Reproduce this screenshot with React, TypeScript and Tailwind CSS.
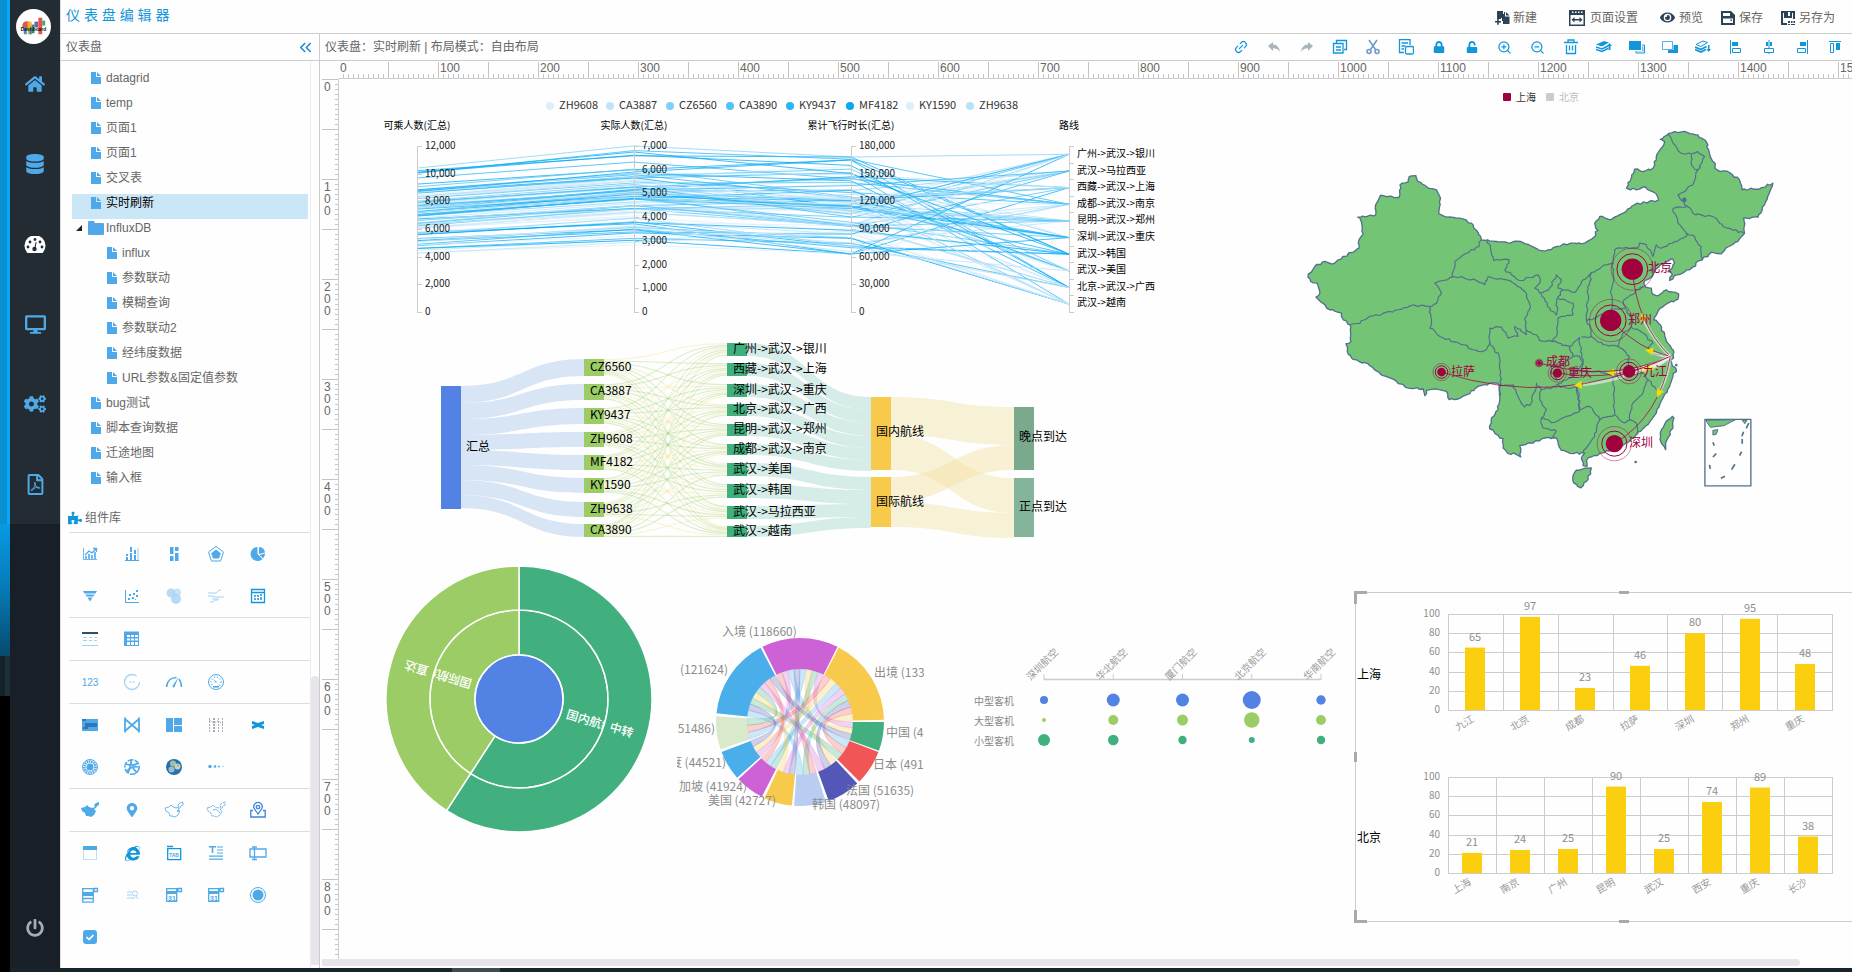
import type { ReactNode } from "react";
import {
  FaCogs,
  FaDatabase,
  FaDesktop,
  FaEye,
  FaHome,
  FaInternetExplorer,
  FaLock,
  FaMapMarkerAlt,
  FaPowerOff,
  FaPuzzlePiece,
  FaRegFilePdf,
  FaUnlock,
} from "react-icons/fa";
import { FiChevronsLeft, FiLink2, FiZoomIn, FiZoomOut } from "react-icons/fi";

// Widgets keep editor coordinates, the board itself starts right after the rulers.
const ORIGIN = { x: 339, y: 79 };

const BLUE = "#5282e4";
const LIME = "#9bcc66";
const GREEN = "#41b07e";
const YELLOW = "#f7ca4c";

type Pt = [number, number];

function createRandom(seed: number) {
  let s = seed;
  return () => {
    s = (s * 16807) % 2147483647;
    return s / 2147483647;
  };
}

/* ---------------------------------------------------------------- sidebar */

function GaugeIcon() {
  return (
    <svg viewBox="0 0 22 17" className="h-[17px] w-[22px]" aria-hidden="true">
      <path d="M3 16.500A10.500 10.500 0 1119 16.500q-.5.5-1.200.5H4.200q-.7 0-1.200-.5z" fill="currentColor" />
      <g fill="#242c33">
        <circle cx="4" cy="11" r="1.400" />
        <circle cx="6" cy="6" r="1.400" />
        <circle cx="11" cy="3.500" r="1.400" />
        <circle cx="16" cy="6" r="1.400" />
        <circle cx="18" cy="11" r="1.400" />
        <circle cx="10.500" cy="13" r="2.200" />
        <path d="M11.600 6l1 .3-1.200 6h-1z" />
      </g>
    </svg>
  );
}

const NAV = [
  { label: "首页", icon: <FaHome size={20} /> },
  { label: "数据源", icon: <FaDatabase size={20} /> },
  { label: "仪表盘", icon: <GaugeIcon />, active: true },
  { label: "大屏", icon: <FaDesktop size={21} /> },
  { label: "设置", icon: <FaCogs size={22} /> },
  { label: "报表", icon: <FaRegFilePdf size={21} /> },
];

function Logo() {
  return (
    <svg viewBox="0 0 36 36" className="h-[35px] w-[35px]" aria-hidden="true">
      <circle cx="18" cy="18" r="18" fill="#fff" />
      <circle cx="11" cy="17" r="4.500" fill="#e2574c" />
      <path d="M8 18h3v8H8z" fill="#3b8fd0" />
      <path d="M12 13h4v13h-4z" fill="#f0b429" />
      <path d="M16 16h3v9h-3z" fill="#2f8f6b" />
      <path d="M19 13h4v6h-4z" fill="#7b5ea7" />
      <path d="M23 9h4v17h-4z" fill="#e2574c" />
      <path d="M27 12h3v5h-3z" fill="#3fa66b" />
      <path d="M14 20h2v6h-2z" fill="#2d7fc4" />
      <text x="18" y="23" fontSize="5" fontWeight="700" textAnchor="middle" fill="#111">
        Dashboard
      </text>
    </svg>
  );
}

function Sidebar() {
  return (
    <nav className="flex w-[50px] shrink-0 flex-col items-stretch bg-[#181f26]">
      <div className="bg-[#242c33] pt-[9px]">
        <div className="flex justify-center pr-[3px]">
          <Logo />
        </div>
        {NAV.map((item) => (
          <button
            key={item.label}
            type="button"
            aria-label={item.label}
            className={
              item.active
                ? "flex h-20 w-full items-center justify-center text-white"
                : "flex h-20 w-full items-center justify-center text-[#4fa9e8]"
            }
          >
            {item.icon}
          </button>
        ))}
      </div>
      <button
        type="button"
        aria-label="退出"
        className="mt-auto flex h-20 items-center justify-center text-[#a3adb3]"
      >
        <FaPowerOff size={18} />
      </button>
    </nav>
  );
}

/* ----------------------------------------------------------------- header */

function Glyph({ d, children }: { d?: string; children?: ReactNode }) {
  return (
    <svg
      viewBox="0 0 16 16"
      className="h-4 w-4 shrink-0"
      fill="currentColor"
      fillRule="evenodd"
      aria-hidden="true"
    >
      {d && <path d={d} />}
      {children}
    </svg>
  );
}

function Header() {
  return (
    <header className="flex h-[34px] shrink-0 items-center justify-between border-b border-[#ccc] pl-[5px] pr-[17px]">
      <h1 className="pb-1 text-sm text-[#1296db]">仪 表 盘 编 辑 器</h1>
      <div className="flex items-center pt-[2px] text-xs text-[#666]">
        <button type="button" className="mr-8 flex items-center gap-[2px]">
          <span className="text-[#2c4356]">
            <Glyph d="M2 1h6v3h-1v4H6v1H2zM9 2l1 0 0 4.500 4.500 0V14H8v-3H7V4h2zM11 2l3.500 3.500H11zM0 11h2.200V9h1.600v2H6v1.600H3.800v2.200H2.200v-2.200H0z" />
          </span>
          新建
        </button>
        <button type="button" className="mr-[22px] flex items-center gap-[5px]">
          <span className="text-[#2c4356]">
            <Glyph d="M0 0h16v16H0zM1.500 5v9.500h13V5zM3 1.500v1.500h1.500V1.500zM6 1.500v1.500h1.500V1.500zM9 1.500v1.500h1.500V1.500zM12 1.500v1.500h1.500V1.500zM2.500 9.700l3-2.700v2h5V7l3 2.700-3 2.700v-2h-5v2z" />
          </span>
          页面设置
        </button>
        <button type="button" className="mr-[17px] flex items-center gap-1">
          <FaEye size={15} className="text-[#2c4356]" />
          预览
        </button>
        <button type="button" className="mr-[17px] flex items-center gap-[3px]">
          <span className="text-[#2c4356]">
            <Glyph d="M1 1h10l4 4v10H1zM3 3v3h7V3zM3 8.500V13h10V8.500zM10.500 9.500h1.500v1.500h-1.500z" />
          </span>
          保存
        </button>
        <button type="button" className="flex items-center gap-[3px]">
          <span className="text-[#2c4356]">
            <Glyph d="M1 1h14v8h-2V3h-1v5H4V3H3v10h4v2H1zM8 2v4h2V2zM8 11h2v2H8zM11 11h1.500v2H11zM13.500 11H15v2h-1.500zM8 14h2v1H8zM11 14h4v1h-4z" />
          </span>
          另存为
        </button>
      </div>
    </header>
  );
}

const line = { fill: "none", stroke: "currentColor", strokeWidth: 1.3 };

const TOOLS: { label: string; icon: ReactNode; muted?: boolean }[] = [
  {
    label: "链接",
    icon: <FiLink2 size={14} className="-rotate-45" />,
  },
  {
    label: "撤销",
    muted: true,
    icon: <Glyph d="M2 7l5-4v2.500c4 .2 6.500 3 7 7.500-1.500-2.500-3.500-3.700-7-3.700V12z" />,
  },
  {
    label: "重做",
    muted: true,
    icon: <Glyph d="M14 7L9 3v2.500c-4 .2-6.500 3-7 7.500 1.500-2.500 3.500-3.700 7-3.700V12z" />,
  },
  {
    label: "复制",
    icon: (
      <Glyph>
        <path {...line} d="M4.500 4V1.500h10v9H12M1.500 4.500H11V14H1.500zM4 8h5M4 11h5" />
      </Glyph>
    ),
  },
  {
    label: "剪切",
    icon: (
      <Glyph>
        <g {...line} stroke="#6f9cc4" strokeWidth={1.6}>
          <path d="M4 1l6.500 9.500M12 1L5.500 10.500" />
          <circle cx="4" cy="12.500" r="2" />
          <circle cx="12" cy="12.500" r="2" />
        </g>
      </Glyph>
    ),
  },
  {
    label: "多选",
    icon: (
      <Glyph>
        <path {...line} d="M6 13.500H1.500v-13H12V6M3.500 4h6.500M3.500 7h4M3.500 10H6" />
        <rect {...line} x="7.500" y="7.500" width="8" height="7.500" rx="1.500" />
      </Glyph>
    ),
  },
  { label: "锁定", icon: <FaLock size={12} /> },
  { label: "解锁", icon: <FaUnlock size={12} /> },
  { label: "放大", icon: <FiZoomIn size={15} /> },
  { label: "缩小", icon: <FiZoomOut size={15} /> },
  {
    label: "删除",
    icon: (
      <Glyph>
        <path {...line} d="M1 3.500h14M5 3V1h6v2M3.500 6v8.500h9V6M6.500 6.500v5M9.500 6.500v5" />
      </Glyph>
    ),
  },
  {
    label: "置顶",
    icon: (
      <Glyph d="M0 5.500L8 2l5 1.500-7 4zM12.500 11V7H11l2.500-3L16 7h-1.500v4z">
        <path {...line} strokeWidth={1.6} d="M0 8l6 2 6-3M0 10.500l6 2 6-3" />
      </Glyph>
    ),
  },
  {
    label: "上移一层",
    icon: (
      <Glyph d="M0 2h12v9H0z">
        <path {...line} strokeWidth={1} d="M13 6h2.500v8H7v-2" />
        <path d="M13 7.500h1.500v5H8V12h5z" opacity=".6" />
      </Glyph>
    ),
  },
  {
    label: "下移一层",
    icon: (
      <Glyph d="M11.500 6H16v8H6v-3h5.500z">
        <path {...line} strokeWidth={1} d="M.5 2.500h10v8H.5z" opacity=".7" />
      </Glyph>
    ),
  },
  {
    label: "置底",
    icon: (
      <Glyph d="M13 6h1.500v4H16l-2.300 3L11.500 10H13z">
        <path {...line} strokeWidth={1} d="M1 5.500L8 2l4.500 1.500L6 7.500z" />
        <path {...line} strokeWidth={1.8} d="M0 8l6 2.500 5.500-3M0 10.500l6 2.500 5-2.500" />
      </Glyph>
    ),
  },
  {
    label: "左对齐",
    icon: (
      <Glyph d="M2 1h1v14H2zM4 3h6v4H4z">
        <path {...line} strokeWidth={1} d="M4.500 9.500h8v4h-8z" />
      </Glyph>
    ),
  },
  {
    label: "水平居中",
    icon: (
      <Glyph d="M7.500 1h1v14h-1zM5 3h6v4H5z">
        <path {...line} strokeWidth={1} fill="#fff" d="M3.500 9.500h9v4h-9z" />
      </Glyph>
    ),
  },
  {
    label: "右对齐",
    icon: (
      <Glyph d="M13 1h1v14h-1zM6 3h6v4H6z">
        <path {...line} strokeWidth={1} d="M3.500 9.500h8v4h-8z" />
      </Glyph>
    ),
  },
  {
    label: "顶对齐",
    icon: (
      <Glyph d="M2 2h12v1H2zM9 4h4v7H9z">
        <path {...line} strokeWidth={1} d="M3.500 4.500h3v9h-3z" />
      </Glyph>
    ),
  },
];

/* ------------------------------------------------------------- left panel */

const TREE: { name: string; depth: number; kind?: "folder"; active?: boolean }[] = [
  { name: "datagrid", depth: 0 },
  { name: "temp", depth: 0 },
  { name: "页面1", depth: 0 },
  { name: "页面1", depth: 0 },
  { name: "交叉表", depth: 0 },
  { name: "实时刷新", depth: 0, active: true },
  { name: "InfluxDB", depth: 0, kind: "folder" },
  { name: "influx", depth: 1 },
  { name: "参数联动", depth: 1 },
  { name: "模糊查询", depth: 1 },
  { name: "参数联动2", depth: 1 },
  { name: "经纬度数据", depth: 1 },
  { name: "URL参数&固定值参数", depth: 1 },
  { name: "bug测试", depth: 0 },
  { name: "脚本查询数据", depth: 0 },
  { name: "迁途地图", depth: 0 },
  { name: "输入框", depth: 0 },
];

function Tree() {
  return (
    <ul className="ml-[11px] mr-[2px] pt-2 text-xs text-[#666]">
      {TREE.map((node, i) => (
        <li key={i} className={node.active ? "h-[25px] bg-[#cbe6f6] text-black" : "h-[25px]"}>
          <button
            type="button"
            className={
              node.kind
                ? "flex h-[18px] items-center gap-[2px] pl-1"
                : node.depth
                  ? "flex h-[18px] items-center gap-[5px] pl-[35px]"
                  : "flex h-[18px] items-center gap-[5px] pl-[19px]"
            }
          >
            {node.kind ? (
              <>
                <svg viewBox="0 0 6 6" className="mr-1 h-[6px] w-[6px]" aria-hidden="true">
                  <path d="M6 0v6H0z" fill="#222" />
                </svg>
                <svg viewBox="0 0 16 14" className="h-[14px] w-4" fill="#4fa9e8" aria-hidden="true">
                  <path d="M1 0h5l1 2h8a1 1 0 011 1v10a1 1 0 01-1 1H1a1 1 0 01-1-1V1a1 1 0 011-1z" />
                </svg>
              </>
            ) : (
              <svg viewBox="0 0 10 12" className="h-3 w-[10px]" fill="#4fa9e8" aria-hidden="true">
                <path d="M0 0h5v5h5v7H0zM6 0l4 4H6z" />
              </svg>
            )}
            {node.name}
          </button>
        </li>
      ))}
    </ul>
  );
}

const CHINA_MINI =
  "M-1 6l4-1 2-2 2 2 3 1 3-1-1-2 2-2 3-1 0 3-2 1-1 2-2 1 2 2-2 4-3 2-3-1-2 0-1-3-3-2z";

function Ico({ children, light }: { children: ReactNode; light?: boolean }) {
  return (
    <svg
      viewBox="0 0 16 16"
      className={light ? "h-4 w-4 overflow-visible text-[#a5d2f2]" : "h-4 w-4 overflow-visible text-[#4fa9e8]"}
      fill="currentColor"
      fillRule="evenodd"
      aria-hidden="true"
    >
      {children}
    </svg>
  );
}

const cal31 = (
  <Ico>
    <path {...line} d="M.700 1.700h10v12.600h-10zM12 1.500h3.500v3H12z" />
    <path d="M1 4h10v3H1z" />
    <text x="2" y="13.500" fontSize="7" fontWeight="700">
      31
    </text>
  </Ico>
);

const WIDGET_GROUPS: { label: string; icon: ReactNode }[][] = [
  [
    {
      label: "折线图",
      icon: (
        <Ico>
          <path d="M1 2h1v11h13v1H1zM3 10h2v3H3zM6 8h2v5H6zM9 9h2v4H9zM12 6h2v7h-2z" opacity=".8" />
          <path {...line} d="M3 9l4-4 3 2 4-4M11 2.500h3.500V6" />
        </Ico>
      ),
    },
    {
      label: "柱状图",
      icon: (
        <Ico>
          <path d="M1 14h14v1H1zM2 8h2v2H2zM2 11h2v3H2zM6 1h2v5H6zM6 7h2v7H6zM10 4h2v4h-2zM10 9h2v5h-2z" />
          <path d="M13 2h2v12h-2z" opacity=".3" />
        </Ico>
      ),
    },
    {
      label: "瀑布图",
      icon: (
        <Ico>
          <path d="M4 1h3.500v7H4zM4 10h3.500v5H4zM9 1h3.500v4H9zM9 7h3.500v8H9z" />
        </Ico>
      ),
    },
    {
      label: "雷达图",
      icon: (
        <Ico>
          <path {...line} strokeWidth={1} d="M8 .5l7.500 5.500-3 9h-9l-3-9z" />
          <path d="M8 3.500l4.800 3.700-1.800 5.300H5L3.200 7.200z" />
        </Ico>
      ),
    },
    {
      label: "饼图",
      icon: (
        <Ico>
          <path d="M7.500 1v7l5 5A7 7 0 117.500 1zM9 1a6.500 6.500 0 016 5.500L9 8zM9.500 9l5.500-1.500c0 2-.7 3.500-2 4.700z" />
        </Ico>
      ),
    },
    {
      label: "漏斗图",
      icon: (
        <Ico>
          <path d="M1 3h14l-1.500 2.500h-11zM3.500 6.500h9l-1 2h-7zM5.500 9.500h5L8 13.500z" />
        </Ico>
      ),
    },
    {
      label: "散点图",
      icon: (
        <Ico>
          <path d="M1 2h1v12h13v1H1zM4 10h2v2H4zM5 6h2v2H5zM8 9h2v2H8zM9 5h2v2H9zM12 7h2v2h-2zM12 2h2v2h-2zM11 11h1v1h-1z" />
        </Ico>
      ),
    },
    {
      label: "气泡图",
      icon: (
        <Ico light>
          <circle cx="5" cy="5" r="4.500" opacity=".8" />
          <circle cx="11" cy="4.500" r="4" opacity=".6" />
          <circle cx="10" cy="11" r="5" opacity=".8" />
        </Ico>
      ),
    },
    {
      label: "主题河流",
      icon: (
        <Ico light>
          <path {...line} strokeWidth={1} d="M0 5h8l3-3h2M0 8h4l3 1h9M4 11h7M2 14h3l2-2h3" />
        </Ico>
      ),
    },
    {
      label: "日历图",
      icon: (
        <Ico>
          <path {...line} stroke="#1296db" d="M1.500 1.500h13v13h-13zM1.500 4.500h13" />
          <path d="M4 7h2v2H4zM7 7h2v2H7zM10 6h2v2h-2zM4 10h2v2H4zM7 10h2v2H7zM10 9h2v3h-2z" />
        </Ico>
      ),
    },
  ],
  [
    {
      label: "交叉表",
      icon: (
        <Ico light>
          <path d="M0 1h16v2H0z" fill="#2c4f6e" />
          <path d="M1 6h4v1H1zM7 6h3v1H7zM12 6h3v1h-3zM1 9h4v1H1zM7 9h3v1H7zM12 9h3v1h-3zM0 14h16v1H0z" />
        </Ico>
      ),
    },
    {
      label: "表格",
      icon: (
        <Ico>
          <path d="M0 .500h15V15H0zM3 4v2h3V4zM7 4v2h3V4zM11 4v2h3V4zM3 7.500v2h3v-2zM7 7.500v2h3v-2zM11 7.500v2h3v-2zM3 11v3h3v-3zM7 11v3h3v-3zM11 11v3h3v-3z" />
        </Ico>
      ),
    },
  ],
  [
    { label: "指标", icon: <span className="text-[10px] text-[#4fa9e8]">123</span> },
    {
      label: "进度",
      icon: (
        <Ico light>
          <circle {...line} cx="8" cy="8" r="7.500" strokeDasharray="40 7" />
          <path d="M5 7.500h2.500v1H5zM8.500 7.500H11v1H8.500z" />
        </Ico>
      ),
    },
    {
      label: "仪表",
      icon: (
        <Ico>
          <path {...line} strokeWidth={1.7} d="M.5 13C1 7 5 3.500 10.500 3.500M13 5c1.500 2 2.500 4 2.500 8" />
          <path d="M12.500 3L8.500 13c-1 1-2.500 0-2-1z" />
        </Ico>
      ),
    },
    {
      label: "刻度盘",
      icon: (
        <Ico>
          <circle {...line} strokeWidth={1} cx="8" cy="8" r="7.500" />
          <circle {...line} strokeWidth={1.2} cx="8" cy="8" r="5" strokeDasharray="1 2" />
          <path d="M5 5l4 3-1 1zM5 12h6v1.500H5z" />
        </Ico>
      ),
    },
  ],
  [
    {
      label: "热力图",
      icon: (
        <Ico>
          <path d="M0 2h16v12H0z" />
          <path d="M0 2h4v2H0zM3 6h12v4H3zM1 10h5v2H1z" fill="#2f78b5" />
        </Ico>
      ),
    },
    {
      label: "桑基图",
      icon: (
        <Ico>
          <path {...line} strokeWidth={1.8} d="M1 .5v15M15 .5v15M1 2l14 12M15 2L1 14" />
        </Ico>
      ),
    },
    {
      label: "矩形树图",
      icon: (
        <Ico>
          <path d="M0 1h7v14H0zM8 1h8v7H8zM8 9h8v6H8z" />
        </Ico>
      ),
    },
    {
      label: "平行坐标",
      icon: (
        <Ico light>
          <path {...line} stroke="#a9a9b8" strokeWidth={1} strokeDasharray="2 1" d="M1.500 1v14M5.500 1v14M6.500 1v14M10.500 1v14M14.500 1v14M1 3l5 3 4-2 5 3" />
        </Ico>
      ),
    },
    {
      label: "关系图",
      icon: (
        <Ico>
          <path d="M2 4l6 2 6-2v8l-6-2-6 2z" fill="#1296db" />
          <path d="M2 7l3 1-3 1zM14 7l-3 1 3 1z" fill="#fff" />
        </Ico>
      ),
    },
    {
      label: "旭日图",
      icon: (
        <Ico>
          <circle cx="8" cy="8" r="3.500" />
          <circle {...line} strokeWidth={2.5} cx="8" cy="8" r="5.500" strokeDasharray="1.500 .7" />
          <circle {...line} strokeWidth={1} cx="8" cy="8" r="7.500" />
        </Ico>
      ),
    },
    {
      label: "和弦图",
      icon: (
        <Ico>
          <circle {...line} strokeWidth={1.6} cx="8" cy="8" r="7.200" strokeDasharray="6 1.300" />
          <path {...line} strokeWidth={1.8} d="M2 5c5 2 8 2 12-1M3 12c4-4 7-5 11-4M7 1c1 5-2 9-3 13M9 9l4 5" />
        </Ico>
      ),
    },
    {
      label: "气泡树",
      icon: (
        <Ico>
          <circle cx="8" cy="8" r="8" fill="#2272b0" />
          <circle cx="7" cy="4.500" r="3" fill="#a9bf9c" />
          <circle cx="11.500" cy="7.500" r="3" fill="#c8d3c4" />
          <circle cx="5.500" cy="10.500" r="3" fill="#9cbccb" />
          <circle cx="12" cy="6.500" r="1" fill="#d98a5b" />
        </Ico>
      ),
    },
    {
      label: "单轴散点",
      icon: (
        <Ico>
          <circle cx="2" cy="7.500" r="1.700" />
          <circle cx="7" cy="7.500" r="1.300" />
          <circle cx="11" cy="7.500" r="1" />
          <circle cx="15" cy="7.500" r=".8" opacity=".5" />
        </Ico>
      ),
    },
  ],
  [
    {
      label: "地图",
      icon: (
        <Ico>
          <path d={CHINA_MINI} />
        </Ico>
      ),
    },
    { label: "标记", icon: <FaMapMarkerAlt size={14} className="text-[#4fa9e8]" /> },
    {
      label: "轮廓地图",
      icon: (
        <Ico>
          <path {...line} strokeWidth={0.8} d={CHINA_MINI} />
          <circle cx="12" cy="9" r="1" />
        </Ico>
      ),
    },
    {
      label: "迁徙地图",
      icon: (
        <Ico>
          <path {...line} strokeWidth={0.8} strokeDasharray="3 .7" d={CHINA_MINI} />
          <path {...line} strokeWidth={0.8} d="M5 8c3-1 5 0 7 3" />
        </Ico>
      ),
    },
    {
      label: "定位地图",
      icon: (
        <Ico>
          <g {...line} stroke="#3d86d8">
            <path d="M3 8.500H.800V15h14.400V8.500H13M8 12L4.500 7a4.200 4.200 0 117 0z" />
            <circle cx="8" cy="5" r="1.700" />
          </g>
        </Ico>
      ),
    },
  ],
  [
    {
      label: "面板",
      icon: (
        <Ico>
          <path {...line} strokeWidth={1} d="M1.500 1.500h13v13h-13z" opacity=".35" />
          <path d="M1 1h14v4H1z" />
        </Ico>
      ),
    },
    { label: "网页", icon: <FaInternetExplorer size={15} className="text-[#1296db]" /> },
    {
      label: "标签页",
      icon: (
        <Ico>
          <path {...line} stroke="#1296db" d="M1.700 3.700h13v11h-13zM1 1.500h6" />
          <text x="8" y="11.500" fontSize="5" fontWeight="700" textAnchor="middle">
            TAB
          </text>
        </Ico>
      ),
    },
    {
      label: "文本",
      icon: (
        <Ico>
          <path d="M1 1h7v1.500H5.300V8H3.700V2.500H1zM9 1.500h6v1H9zM9 4.500h6v1H9zM9 7.500h6v1H9zM1 10.500h14v1.300H1zM1 13.500h14v1.300H1z" />
        </Ico>
      ),
    },
    {
      label: "输入框",
      icon: (
        <Ico>
          <path {...line} d="M0 4h16v8H0zM4.500 2v12.500M2 2h5M2 14.500h5" />
        </Ico>
      ),
    },
    {
      label: "下拉框",
      icon: (
        <Ico>
          <path {...line} d="M.700 1.700h10.600v13.500H.700zM12 1.500h3.500v3H12zM1 11.500h10" />
          <path d="M1 5h10v4H1z" />
        </Ico>
      ),
    },
    {
      label: "查询",
      icon: (
        <Ico light>
          <path {...line} strokeWidth={1} d="M3 5h5M3 8h5M3 11h8M12 9l2 3" />
          <circle {...line} strokeWidth={1} cx="11" cy="6.500" r="2.500" />
        </Ico>
      ),
    },
    { label: "日期", icon: cal31 },
    { label: "日期范围", icon: cal31 },
    {
      label: "单选",
      icon: (
        <Ico>
          <circle {...line} strokeWidth={1} cx="8" cy="8" r="7.500" />
          <circle cx="8" cy="8" r="5.500" />
        </Ico>
      ),
    },
    {
      label: "复选",
      icon: (
        <Ico>
          <rect x="1" y="1" width="14" height="14" rx="3" />
          <path d="M4.500 8l2.500 2.500 4.500-4.500" fill="none" stroke="#fff" strokeWidth="1.700" />
        </Ico>
      ),
    },
  ],
];

function LeftPanel() {
  return (
    <aside className="flex w-[259px] shrink-0 flex-col border-r border-[#ccc]">
      <div className="flex h-[27px] shrink-0 items-center justify-between border-b border-[#ccc] pl-[5px] pr-1 text-xs text-[#666]">
        仪表盘
        <button type="button" aria-label="收起" className="text-[#1e88d2]">
          <FiChevronsLeft size={19} />
        </button>
      </div>
      <div className="flex min-h-0 flex-1">
        <div className="min-w-0 flex-1 overflow-hidden border-r border-[#f0e8f4]">
          <Tree />
          <h2 className="flex h-[38px] items-center gap-[3px] pl-[7px] pt-[10px] text-xs text-[#666]">
            <FaPuzzlePiece size={14} className="text-[#1296db]" />
            组件库
          </h2>
          {WIDGET_GROUPS.map((group, i) => (
            <div key={i} className="ml-2 grid grid-cols-[repeat(5,42px)] border-t border-[#ddd]">
              {group.map((item) => (
                <button
                  key={item.label}
                  type="button"
                  aria-label={item.label}
                  className="flex h-[42px] items-center justify-center"
                >
                  {item.icon}
                </button>
              ))}
            </div>
          ))}
        </div>
        <div className="flex w-2 shrink-0 flex-col pb-[3px]">
          <div className="flex-[615]" />
          <div className="flex-[289] rounded-t bg-[#e8e4ec]" />
        </div>
      </div>
    </aside>
  );
}

/* ----------------------------------------------------------------- rulers */

const TICKS_X = Array.from({ length: 304 }, (_, i) => i * 5);
const TICKS_Y = Array.from({ length: 176 }, (_, i) => i * 5);

function RulerX() {
  return (
    <svg className="col-start-2 h-[18px] w-full border-b border-[#ccc]" fill="#666" fontSize="12">
      <path
        d={TICKS_X.map((t) => `M${t - 0.5} ${t % 50 ? 13 : 1}V18`).join("")}
        stroke="#c4c4c4"
      />
      {TICKS_X.filter((t) => t % 100 === 0).map((t) => (
        <text key={t} x={t + 1} y="11">
          {t}
        </text>
      ))}
    </svg>
  );
}

function RulerY() {
  return (
    <svg className="h-full w-full border-r border-[#ccc]" fill="#666" fontSize="12">
      <path
        d={TICKS_Y.map((t) => `M${t % 50 ? 15 : 2} ${t + 0.5}H19`).join("")}
        stroke="#c4c4c4"
      />
      {TICKS_Y.filter((t) => t % 100 === 0).map((t) =>
        String(t)
          .split("")
          .map((digit, i) => (
            <text key={`${t}-${i}`} x="4" y={t + 12 + i * 12}>
              {digit}
            </text>
          ))
      )}
    </svg>
  );
}

/* ---------------------------------------------------------------- widgets */

function Widget({
  x,
  y,
  w,
  h,
  label,
  children,
}: {
  x: number;
  y: number;
  w: number;
  h: number;
  label: string;
  children: ReactNode;
}) {
  return (
    <svg
      role="img"
      aria-label={label}
      className="absolute"
      style={{ left: x - ORIGIN.x, top: y - ORIGIN.y }}
      width={w}
      height={h}
      viewBox={`${x} ${y} ${w} ${h}`}
    >
      {children}
    </svg>
  );
}

const LEGEND = [
  { name: "ZH9608", color: "#dceefa" },
  { name: "CA3887", color: "#bfe4fa" },
  { name: "CZ6560", color: "#81d0fa" },
  { name: "CA3890", color: "#4fc3f7" },
  { name: "KY9437", color: "#29b6f6" },
  { name: "MF4182", color: "#03a9f4" },
  { name: "KY1590", color: "#dceefa" },
  { name: "ZH9638", color: "#b8e2fa" },
];

const PARALLEL_AXES = [
  { x: 417, name: "可乘人数(汇总)", ticks: ["12,000", "10,000", "8,000", "6,000", "4,000", "2,000", "0"] },
  { x: 634, name: "实际人数(汇总)", ticks: ["7,000", "6,000", "5,000", "4,000", "3,000", "2,000", "1,000", "0"] },
  { x: 851, name: "累计飞行时长(汇总)", ticks: ["180,000", "150,000", "120,000", "90,000", "60,000", "30,000", "0"] },
];

const ROUTES = [
  "广州->武汉->银川",
  "武汉->马拉西亚",
  "西藏->武汉->上海",
  "成都->武汉->南京",
  "昆明->武汉->郑州",
  "深圳->武汉->重庆",
  "武汉->韩国",
  "武汉->美国",
  "北京->武汉->广西",
  "武汉->越南",
];

const PARALLEL_LINES = (() => {
  const rand = createRandom(77);
  return Array.from({ length: 100 }, (_, i) => {
    const y1 = 168 + (i % 3 ? (rand() + rand()) / 2 : rand()) * 86;
    const y2 = y1 * 1.1 - 36 + (rand() - 0.5) * 8;
    const y3 = Math.min(254, Math.max(157, y2 + 9 + (rand() - 0.5) * 44));
    const y4 = 154.3 + (i % 10) * 16.65;
    return {
      d: `M417 ${y1.toFixed(1)}L634 ${y2.toFixed(1)}L851 ${y3.toFixed(1)}L1069 ${y4.toFixed(1)}`,
      color: LEGEND[Math.floor(rand() * 8)].color,
    };
  });
})();

function ParallelChart() {
  return (
    <Widget x={370} y={90} w={830} h={240} label="平行坐标">
      {LEGEND.map((item, i) => (
        <g key={item.name} fontSize="11">
          <circle cx={550 + i * 60} cy="106" r="4" fill={item.color} />
          <text x={559 + i * 60} y="109" fill="#333">
            {item.name}
          </text>
        </g>
      ))}
      {PARALLEL_LINES.map((l, i) => (
        <path key={i} d={l.d} fill="none" stroke={l.color} opacity=".75" />
      ))}
      {PARALLEL_AXES.map((axis) => (
        <g key={axis.x}>
          <text x={axis.x} y="129" fontSize="10" textAnchor="middle" fill="#000">
            {axis.name}
          </text>
          <path d={`M${axis.x + 0.5} 146V313`} stroke="#ccc" />
          {axis.ticks.map((tick, i) => {
            const y = Math.round(146 + (i * 166) / (axis.ticks.length - 1));
            return (
              <g key={tick}>
                <path d={`M${axis.x} ${y + 0.5}h5`} stroke="#ccc" />
                <text x={axis.x + 8} y={y + 3} fontSize="10" fill="#222">
                  {tick}
                </text>
              </g>
            );
          })}
        </g>
      ))}
      <text x="1069" y="129" fontSize="10" textAnchor="middle">
        路线
      </text>
      <path d="M1069.500 146V313" stroke="#ccc" />
      <path
        d={ROUTES.concat("").map((_, i) => `M1069 ${Math.round(146 + i * 16.6) + 0.5}h5`).join("")}
        stroke="#ccc"
      />
      {ROUTES.map((name, i) => (
        <text key={name} x="1077" y={157 + i * 16.6} fontSize="10">
          {name}
        </text>
      ))}
    </Widget>
  );
}

const FLIGHTS: [string, number, number][] = [
  ["CZ6560", 359, 17],
  ["CA3887", 384, 16],
  ["KY9437", 408, 16],
  ["ZH9608", 432, 15],
  ["MF4182", 455, 15],
  ["KY1590", 478, 15],
  ["ZH9638", 502, 15],
  ["CA3890", 524, 13],
];

const ROUTE_NODES: [string, number, number][] = [
  ["广州->武汉->银川", 343, 13],
  ["西藏->武汉->上海", 363, 13],
  ["深圳->武汉->重庆", 384, 13],
  ["北京->武汉->广西", 404, 12],
  ["昆明->武汉->郑州", 424, 12],
  ["成都->武汉->南京", 444, 11],
  ["武汉->美国", 463, 13],
  ["武汉->韩国", 484, 14],
  ["武汉->马拉西亚", 506, 13],
  ["武汉->越南", 526, 11],
];

function ribbon(x0: number, y0: number, x1: number, y1: number, h: number) {
  const mx = (x0 + x1) / 2;
  return `M${x0} ${y0}C${mx} ${y0} ${mx} ${y1} ${x1} ${y1}v${h}C${mx} ${y1 + h} ${mx} ${y0 + h} ${x0} ${y0 + h}z`;
}

function SankeyChart() {
  let rootY = 386;
  let domesticY = 397;
  let foreignY = 477;
  return (
    <Widget x={430} y={330} w={660} h={220} label="桑基图">
      {FLIGHTS.map(([name, y, h]) => {
        const d = ribbon(461, rootY, 584, y, h);
        rootY += h;
        return <path key={name} d={d} fill="#d7e5f5" />;
      })}
      {FLIGHTS.map(([name, y, h], i) =>
        ROUTE_NODES.map(([route, ry, rh], j) => (
          <path
            key={name + route}
            d={ribbon(604, y + (j * h) / 10, 727, ry + (i * rh) / 8, 1.3)}
            fill={(i + j) % 3 ? LIME : "#efe08a"}
            opacity=".32"
          />
        ))
      )}
      {ROUTE_NODES.map(([name, y, h], i) => {
        const d = ribbon(747, y, 871, i < 6 ? domesticY : foreignY, h);
        if (i < 6) domesticY += h;
        else foreignY += h;
        return <path key={name} d={d} fill="#d5ece8" />;
      })}
      <path d={ribbon(891, 397, 1014, 407, 38)} fill="#f7f2d6" />
      <path d={ribbon(891, 502, 1014, 513, 25)} fill="#f7f2d6" />
      <path d={ribbon(891, 435, 1014, 478, 35)} fill="#f7f2d6" />
      <path d={ribbon(891, 477, 1014, 445, 25)} fill="#f5dda0" opacity=".45" />

      <rect x="441" y="386" width="20" height="123" fill={BLUE} />
      {FLIGHTS.map(([name, y, h]) => (
        <rect key={name} x="584" y={y} width="20" height={h} fill={LIME} />
      ))}
      {ROUTE_NODES.map(([name, y, h]) => (
        <rect key={name} x="727" y={y} width="20" height={h} fill={GREEN} />
      ))}
      <rect x="871" y="397" width="20" height="73" fill={YELLOW} />
      <rect x="871" y="477" width="20" height="50" fill={YELLOW} />
      <rect x="1014" y="407" width="20" height="63" fill="#7aa98d" />
      <rect x="1014" y="478" width="20" height="59" fill="#84b59b" />

      <g fontSize="12" fill="#000">
        <text x="466" y="451">汇总</text>
        {FLIGHTS.map(([name, y, h]) => (
          <text key={name} x="590" y={y + h / 2 + 3}>
            {name}
          </text>
        ))}
        {ROUTE_NODES.map(([name, y, h]) => (
          <text key={name} x="733" y={y + h / 2 + 3}>
            {name}
          </text>
        ))}
        <text x="876" y="436">国内航线</text>
        <text x="876" y="506">国际航线</text>
        <text x="1019" y="441">晚点到达</text>
        <text x="1019" y="511">正点到达</text>
      </g>
    </Widget>
  );
}

function polar(cx: number, cy: number, r: number, deg: number): Pt {
  const a = ((deg - 90) * Math.PI) / 180;
  return [cx + r * Math.cos(a), cy + r * Math.sin(a)];
}

function sector(cx: number, cy: number, r0: number, r1: number, from: number, to: number) {
  const large = to - from > 180 ? 1 : 0;
  const a = polar(cx, cy, r1, from);
  const b = polar(cx, cy, r1, to);
  const c = polar(cx, cy, r0, to);
  const d = polar(cx, cy, r0, from);
  return `M${a}A${r1} ${r1} 0 ${large} 1 ${b}L${c}A${r0} ${r0} 0 ${large} 0 ${d}z`;
}

function SunburstChart() {
  return (
    <Widget x={380} y={560} w={280} h={280} label="旭日图">
      <g stroke="#fff" strokeWidth="1.500">
        <path d={sector(519, 699, 44, 89, 0, 213)} fill={GREEN} />
        <path d={sector(519, 699, 44, 89, 213, 360)} fill={LIME} />
      </g>
      <g fill="#fff" fontSize="12" fontWeight="500">
        <text transform="translate(519 699) rotate(16.500)" x="50" y="5">
          国内航线
        </text>
        <text transform="translate(519 699) rotate(196.500)" x="50" y="5">
          国际航线
        </text>
      </g>
      <g stroke="#fff" strokeWidth="1.500">
        <path d={sector(519, 699, 89, 133, 0, 213)} fill={GREEN} />
        <path d={sector(519, 699, 89, 133, 213, 360)} fill={LIME} />
        <circle cx="519" cy="699" r="44" fill={BLUE} />
      </g>
      <g fill="#fff" fontSize="12" fontWeight="500">
        <text transform="translate(519 699) rotate(16.500)" x="95" y="5">
          中转
        </text>
        <text transform="translate(519 699) rotate(196.500)" x="95" y="5">
          直达
        </text>
      </g>
    </Widget>
  );
}

const CHORD_GROUPS = [
  { from: -26.5, to: 26.5, color: "#cc62d6" },
  { from: 27.5, to: 88.5, color: "#f7ca4c" },
  { from: 90, to: 110, color: "#41b07e" },
  { from: 111, to: 135, color: "#f25555" },
  { from: 137, to: 160, color: "#5358b8" },
  { from: 162, to: 184, color: "#b9cdf2" },
  { from: 185.5, to: 205, color: "#f7ca4c" },
  { from: 207, to: 227, color: "#cc62d6" },
  { from: 228.5, to: 249, color: "#4aaeea" },
  { from: 251, to: 274, color: "#d8eacb" },
  { from: 276, to: 332, color: "#4aaeea" },
];

const CHORD_RIBBONS = (() => {
  const hubs = [0, 1, 10];
  const tints = ["#cc62d6", "#4aaeea", "#f7ca4c", "#f25555", "#5358b8", "#41b07e"];
  return hubs.flatMap((hub, k) => {
    const g = CHORD_GROUPS[hub];
    const step = (g.to - g.from) / 8;
    return CHORD_GROUPS.slice(2, 10).map((leaf, i) => {
      const slot = hub === 1 ? 7 - i : (i * 3 + 7) % 8;
      const a0 = g.from + slot * step;
      const leafStep = (leaf.to - leaf.from) / 3;
      const b0 = leaf.from + k * leafStep;
      const p1 = polar(800, 722, 53, a0);
      const p2 = polar(800, 722, 53, a0 + step);
      const p3 = polar(800, 722, 53, b0);
      const p4 = polar(800, 722, 53, b0 + leafStep);
      return {
        d: `M${p1}A53 53 0 0 1 ${p2}Q800 722 ${p3}A53 53 0 0 1 ${p4}Q800 722 ${p1}z`,
        color: tints[(i + k * 2) % 6],
      };
    });
  });
})();

function ChordChart() {
  return (
    <Widget x={677} y={610} w={247} h={220} label="和弦图">
      {CHORD_RIBBONS.map((r, i) => (
        <path key={i} d={r.d} fill={r.color} fillOpacity=".28" stroke={r.color} strokeOpacity=".4" strokeWidth=".5" />
      ))}
      {CHORD_GROUPS.map((g) => (
        <path key={g.from} d={sector(800, 722, 53, 84, g.from, g.to)} fill={g.color} />
      ))}
      <g fontSize="12" fill="#8c8c8c">
        <text x="722" y="636">入境 (118660)</text>
        <text x="874" y="677">出境 (133144)</text>
        <text x="886" y="737">中国 (49310)</text>
        <text x="873" y="769">日本 (49147)</text>
        <text x="846" y="795">法国 (51635)</text>
        <text x="812" y="809">韩国 (48097)</text>
        <g textAnchor="end">
          <text x="776" y="805">美国 (42727)</text>
          <text x="747" y="791">加坡 (41924)</text>
          <text x="726" y="767">度 (44521)</text>
          <text x="715" y="733">51486)</text>
          <text x="728" y="674">(121624)</text>
        </g>
      </g>
    </Widget>
  );
}

const AIRLINES = ["深圳航空", "华北航空", "厦门航空", "北京航空", "华南航空"];

const BUBBLES = [
  { name: "中型客机", color: BLUE, r: [4, 6.5, 6.5, 9, 4.7] },
  { name: "大型客机", color: LIME, r: [2, 5, 5.5, 7.7, 5] },
  { name: "小型客机", color: GREEN, r: [6, 5.3, 4.2, 3, 4.2] },
];

function BubbleChart() {
  return (
    <Widget x={960} y={630} w={380} h={130} label="气泡图">
      <path d="M1044 679.500h277" stroke="#ccc" strokeWidth="1.500" />
      {AIRLINES.map((name, i) => {
        const x = 1044 + i * 69.25;
        return (
          <g key={name}>
            <path d={`M${x} 680v-6`} stroke="#ccc" />
            <text
              transform={`translate(${x - 2} 664) rotate(-45)`}
              y="4"
              fontSize="10"
              textAnchor="middle"
              fill="#999"
            >
              {name}
            </text>
          </g>
        );
      })}
      {BUBBLES.map((row, j) => (
        <g key={row.name} fill={row.color}>
          <text x="974" y={705 + j * 20} fontSize="10" fill="#888">
            {row.name}
          </text>
          {row.r.map((r, i) => (
            <circle key={i} cx={1044 + i * 69.25} cy={700 + j * 20} r={r} />
          ))}
        </g>
      ))}
    </Widget>
  );
}

/* -------------------------------------------------------------------- map */

// Splits every segment a few times with a small offset, which gives borders their ragged look.
function ragged(points: Pt[], seed: number, closed = false) {
  const rand = createRandom(seed);
  const pts = closed ? [...points, points[0]] : points;
  let d = `M${pts[0]}`;
  for (let i = 1; i < pts.length; i++) {
    const [x0, y0] = pts[i - 1];
    const [x1, y1] = pts[i];
    const n = Math.max(1, Math.round(Math.hypot(x1 - x0, y1 - y0) / 9));
    for (let k = 1; k < n; k++) {
      const x = x0 + ((x1 - x0) * k) / n + (rand() - 0.5) * 7;
      const y = y0 + ((y1 - y0) * k) / n + (rand() - 0.5) * 7;
      d += `L${x.toFixed(0)} ${y.toFixed(0)}`;
    }
    d += `L${x1} ${y1}`;
  }
  return closed ? d + "z" : d;
}

const MAINLAND: Pt[] = [
  [358, 260], [378, 257], [383, 274], [412, 292], [440, 300], [452, 325], [447, 372], [465, 380],
  [510, 385], [550, 405], [575, 450], [593, 450], [625, 456], [700, 458], [766, 484], [825, 462],
  [885, 460], [910, 445], [925, 422], [915, 400], [930, 380], [960, 390], [1000, 370], [1035, 344],
  [1107, 330], [1098, 310], [1068, 292], [1040, 300], [1010, 295], [1035, 238], [1065, 244],
  [1090, 235], [1100, 200], [1125, 155], [1112, 148], [1138, 130], [1185, 124], [1225, 135],
  [1250, 155], [1262, 200], [1283, 240], [1320, 248], [1350, 270], [1358, 300], [1400, 298],
  [1450, 280], [1425, 345], [1405, 382], [1362, 385], [1365, 430], [1345, 455], [1318, 470],
  [1295, 492], [1265, 487], [1238, 510], [1200, 540], [1160, 555], [1140, 572], [1148, 555],
  [1135, 545], [1155, 520], [1150, 508], [1128, 515], [1095, 540], [1088, 560], [1062, 580],
  [1068, 592], [1085, 595], [1088, 612], [1105, 618], [1130, 600], [1167, 612], [1165, 628],
  [1135, 640], [1105, 665], [1092, 690], [1112, 705], [1130, 755], [1150, 780], [1152, 805],
  [1142, 812], [1160, 838], [1150, 860], [1140, 890], [1120, 925], [1100, 970], [1075, 1005],
  [1040, 1035], [1010, 1060], [980, 1075], [935, 1090], [905, 1102], [890, 1112], [892, 1130],
  [880, 1128], [875, 1105], [885, 1090], [850, 1092], [815, 1082], [805, 1062], [800, 1045],
  [765, 1045], [730, 1060], [690, 1068], [693, 1102], [670, 1090], [655, 1092], [640, 1075],
  [640, 1047], [600, 1018], [605, 985], [625, 960], [630, 920], [628, 885], [600, 880], [565, 890],
  [540, 912], [505, 928], [478, 930], [470, 905], [440, 898], [410, 902], [405, 918], [400, 898],
  [355, 895], [320, 875], [280, 858], [240, 828], [185, 805], [172, 785], [168, 762], [183, 755],
  [180, 705], [160, 690], [155, 670], [110, 655], [78, 622], [90, 610], [82, 580], [62, 575],
  [55, 553], [75, 530], [105, 515], [130, 522], [145, 510], [207, 475], [207, 450], [220, 432],
  [210, 385], [203, 382], [258, 374], [256, 355], [272, 316], [328, 322], [330, 285], [356, 275],
];

const ISLANDS: Pt[][] = [
  [[860, 1142], [905, 1135], [895, 1170], [873, 1195], [852, 1180], [850, 1158]],
  [[1130, 995], [1148, 980], [1153, 985], [1150, 1015], [1135, 1045], [1128, 1080], [1115, 1060], [1112, 1030]],
];

const BORDERS: Pt[][] = [
  [[575, 450], [568, 470], [530, 490], [495, 515], [487, 562], [435, 580], [455, 610], [440, 640], [418, 650], [372, 645], [325, 660], [240, 680], [200, 702], [180, 705]],
  [[487, 562], [510, 562], [560, 572], [585, 585], [595, 560], [660, 572], [705, 605], [722, 650], [705, 690], [710, 735], [675, 710], [685, 740], [655, 745], [635, 712], [600, 715], [600, 755], [590, 780], [565, 785], [520, 765], [450, 740], [420, 715], [425, 690], [418, 650]],
  [[593, 450], [612, 512], [658, 510], [645, 540], [690, 572], [745, 555], [750, 580], [735, 595], [750, 610], [778, 600], [800, 555], [815, 570], [805, 595], [855, 608], [880, 570], [905, 548], [950, 525], [970, 520], [975, 480], [995, 475], [1040, 475], [1050, 460], [1070, 465], [1090, 500], [1100, 465], [1115, 475], [1190, 440], [1195, 430]],
  [[755, 612], [780, 655], [800, 675], [805, 620], [820, 600]],
  [[805, 625], [850, 640], [850, 675], [805, 685], [800, 740], [785, 755]],
  [[710, 720], [740, 735], [750, 752], [785, 755], [840, 770], [870, 742]],
  [[905, 550], [895, 600], [890, 690], [905, 725], [905, 740], [875, 742]],
  [[970, 520], [972, 560], [965, 600], [968, 640], [965, 660]],
  [[890, 695], [965, 660], [1005, 655], [1030, 690], [1025, 712], [1000, 730], [985, 770], [1010, 790], [1020, 800]],
  [[905, 740], [940, 765], [985, 770]],
  [[1062, 590], [1040, 600], [1000, 635], [1010, 655]],
  [[1025, 712], [1060, 730], [1090, 760], [1075, 780], [1100, 795], [1140, 800]],
  [[1020, 800], [1015, 830], [1060, 850], [1075, 870], [1100, 900], [1118, 912]],
  [[600, 757], [628, 800], [633, 885], [630, 920]],
  [[630, 885], [670, 885], [690, 930], [705, 952], [725, 940], [740, 880], [755, 900], [800, 890]],
  [[803, 870], [785, 850], [785, 830], [815, 825], [850, 800], [840, 770]],
  [[800, 890], [830, 870], [860, 845], [880, 820], [870, 800], [850, 800]],
  [[755, 900], [750, 930], [770, 960], [755, 985], [795, 998], [830, 980], [870, 965], [865, 930], [860, 890], [830, 895], [800, 885]],
  [[870, 745], [875, 775], [880, 820], [870, 845], [920, 845], [970, 860], [1010, 860], [1060, 850]],
  [[865, 890], [870, 960], [900, 950], [930, 990], [975, 975], [970, 865]],
  [[1075, 870], [1060, 910], [1030, 940], [1020, 990], [1005, 1000], [975, 975]],
  [[755, 985], [760, 1015], [800, 1025], [785, 1045]],
  [[930, 990], [915, 1040], [880, 1090]],
  [[1020, 990], [1040, 1000], [1045, 1035]],
  [[1138, 130], [1150, 160], [1175, 190], [1205, 192], [1225, 185], [1245, 200], [1225, 240], [1205, 225], [1205, 192]],
  [[1225, 240], [1210, 285], [1165, 315], [1185, 345], [1195, 350]],
  [[1150, 355], [1195, 350], [1210, 370], [1280, 385], [1300, 410], [1365, 430]],
  [[1150, 355], [1165, 400], [1190, 430], [1215, 440], [1235, 470], [1238, 510]],
];

const CITIES = [
  { name: "北京", x: 1028, y: 538, r: 32, lx: 1648, ly: 272 },
  { name: "郑州", x: 963, y: 692, r: 32, lx: 1628, ly: 324 },
  { name: "九江", x: 1018, y: 845, r: 19, lx: 1643, ly: 376 },
  { name: "深圳", x: 974, y: 1062, r: 26, lx: 1629, ly: 447 },
  { name: "重庆", x: 803, y: 850, r: 14, lx: 1568, ly: 377 },
  { name: "拉萨", x: 455, y: 847, r: 13, lx: 1451, ly: 376 },
  { name: "成都", x: 748, y: 820, r: 6, lx: 1546, ly: 366 },
];

const FLOWS = [
  { d: "M1142 800Q1040 700 1028 538", trail: "M1142 800Q1095 755 1062 690", tip: [1060, 682, -110] },
  { d: "M1142 800Q1050 780 963 692", trail: "M1142 800Q1110 797 1085 788", tip: [1080, 783, 190] },
  { d: "M1142 800Q1095 835 1018 845", trail: "M1142 800Q1100 830 1070 836", tip: [1058, 838, 170] },
  { d: "M1142 800Q990 880 803 850", trail: "M1142 800Q1060 845 975 850", tip: [964, 848, 180] },
  { d: "M1142 800Q960 880 748 820", trail: "M1142 800Q1110 828 1090 832", tip: [1080, 834, 165] },
  { d: "M1142 800Q800 960 455 847", trail: "M1142 800Q1010 872 880 885", tip: [866, 886, 175] },
  { d: "M1142 800Q1110 980 974 1062", trail: "M1142 800Q1135 860 1112 900", tip: [1108, 910, 115] },
];

function ChinaMap() {
  return (
    <Widget x={1290} y={85} w={500} h={415} label="迁徙地图">
      <rect x="1503" y="93" width="8" height="8" rx="1" fill="#a1003f" />
      <text x="1516" y="101" fontSize="10" fill="#333">
        上海
      </text>
      <rect x="1546" y="93" width="8" height="8" rx="1" fill="#ccc" />
      <text x="1559" y="101" fontSize="10" fill="#bbb">
        北京
      </text>
      <g transform="translate(1290 90) scale(0.333)">
        <g fill="#74c476" stroke="#52708c" strokeWidth="4" strokeLinejoin="round">
          <path d={ragged(MAINLAND, 11, true)} />
          {ISLANDS.map((pts, i) => (
            <path key={i} d={ragged(pts, 5 + i, true)} />
          ))}
          {BORDERS.map((pts, i) => (
            <path key={i} d={ragged(pts, 31 + i)} fill="none" strokeWidth="3.500" />
          ))}
          <circle cx="1184" cy="330" r="5" fill="#52708c" />
          <circle cx="1038" cy="1117" r="2" />
          <circle cx="1160" cy="826" r="2" />
          <rect x="1246" y="989" width="138" height="200" fill="none" />
          <path d="M1248 992l90-2-35 18-40 5zM1270 1022l15-2-5 14-10 2zM1358 992h14l-6 10z" strokeWidth="3" />
          <path
            d="M1378 1000l-8 16M1362 1026l-5 14M1358 1048v14M1356 1086l-6 12M1336 1124l-10 16M1306 1160l-12 6M1270 1058l4 10M1280 1092l-10 10M1260 1126l2 12"
            fill="none"
            strokeWidth="5"
          />
        </g>
        {FLOWS.map((flow) => (
          <g key={flow.d} fill="none">
            <path d={flow.trail} stroke="#fff" strokeOpacity=".5" strokeWidth="10" />
            <path d={flow.d} stroke="#a1003f" strokeOpacity=".75" strokeWidth="3" />
            <path
              d="M14 0L-10 12V-12z"
              fill="#f4dc00"
              transform={`translate(${flow.tip[0]} ${flow.tip[1]}) rotate(${flow.tip[2]})`}
            />
          </g>
        ))}
        {CITIES.map((c) => (
          <g key={c.name} fill="none" stroke="#a1003f">
            <circle cx={c.x} cy={c.y} r={c.r} fill="#a1003f" stroke="none" />
            <circle cx={c.x} cy={c.y} r={c.r * 1.45} strokeWidth="3" />
            <circle cx={c.x} cy={c.y} r={c.r * 1.98} strokeWidth="3" strokeOpacity=".45" />
          </g>
        ))}
      </g>
      <g fontSize="12" fill="#a1003f">
        {CITIES.map((c) => (
          <text key={c.name} x={c.lx} y={c.ly}>
            {c.name}
          </text>
        ))}
      </g>
    </Widget>
  );
}

/* ------------------------------------------------------------- bar charts */

const BAR_CHARTS: { title: string; top: number; data: [string, number][] }[] = [
  {
    title: "上海",
    top: 614,
    data: [["九江", 65], ["北京", 97], ["成都", 23], ["拉萨", 46], ["深圳", 80], ["郑州", 95], ["重庆", 48]],
  },
  {
    title: "北京",
    top: 777,
    data: [["上海", 21], ["南京", 24], ["广州", 25], ["昆明", 90], ["武汉", 25], ["西安", 74], ["重庆", 89], ["长沙", 38]],
  },
];

function BarCharts() {
  return (
    <Widget x={1354} y={590} w={540} h={334} label="柱状图">
      <path d="M1355.500 592.500H1890V921.500H1355.500z" fill="#fefefe" stroke="#ccc" />
      <path
        d="M1367 592.500H1355.500V604M1355.500 910V921.500H1367M1355.500 752v10M1619 592.500h10M1619 921.500h10"
        fill="none"
        stroke="#aaa"
        strokeWidth="3"
      />
      {BAR_CHARTS.map(({ title, top, data }) => {
        const band = 384 / data.length;
        const bottom = top + 96;
        return (
          <g key={title}>
            <text x="1357" y={top + 65} fontSize="12" fill="#000">
              {title}
            </text>
            {[0, 20, 40, 60, 80, 100].map((v) => {
              const y = Math.round(bottom - v * 0.96);
              return (
                <g key={v}>
                  <path d={`M1448 ${y + 0.5}h385`} stroke="#ccc" />
                  <text x="1440" y={y + 3} fontSize="10" textAnchor="end" fill="#8f8f8f">
                    {v}
                  </text>
                </g>
              );
            })}
            {[...data, null].map((_, i) => (
              <path key={i} d={`M${Math.round(1448 + i * band) + 0.5} ${top}v96`} stroke="#ccc" />
            ))}
            {data.map(([name, value], i) => {
              const cx = Math.round(1448 + band * (i + 0.5));
              return (
                <g key={name} fontSize="10">
                  <rect x={cx - 10} y={bottom - value * 0.96} width="20" height={value * 0.96} fill="#fbce10" />
                  <text x={cx} y={bottom - value * 0.96 - 7} fontSize="11" textAnchor="middle" fill="#8f8f8f">
                    {value}
                  </text>
                  <text
                    transform={`translate(${cx} ${bottom + 11}) rotate(-30)`}
                    textAnchor="end"
                    fill="#999"
                  >
                    {name}
                  </text>
                </g>
              );
            })}
          </g>
        );
      })}
    </Widget>
  );
}

/* ------------------------------------------------------------------- page */

export default function App() {
  return (
    <div className="flex h-screen overflow-hidden bg-[#fefefe] font-['Liberation_Sans','Noto_Sans_CJK_SC',sans-serif]">
      <div className="flex w-[10px] shrink-0 flex-col bg-black">
        <div className="flex-[524] border-r-[3px] border-[#06a8f5] bg-[#0a8fd0]" />
        <div className="flex-[132] bg-linear-to-b from-[#069be6] via-[#067ab5] to-[#064b6e]" />
        <div className="flex-[40] border-l-[5px] border-[#14232a] bg-[#1d2f38]" />
        <div className="flex-[276]" />
      </div>
      <div className="flex min-w-0 flex-1 flex-col">
        <div className="flex min-h-0 flex-1">
          <Sidebar />
          <div className="flex min-w-0 flex-1 flex-col border-l border-[#ddd]">
            <Header />
            <div className="flex min-h-0 flex-1">
              <LeftPanel />
              <main className="flex min-w-0 flex-1 flex-col">
                <div className="flex h-[27px] shrink-0 items-center justify-between border-b border-[#ccc] pl-[5px] pr-px text-xs text-[#666]">
                  <p>仪表盘：实时刷新 | 布局模式：自由布局</p>
                  <div className="flex text-[#1296db]">
                    {TOOLS.map((tool) => (
                      <button
                        key={tool.label}
                        type="button"
                        aria-label={tool.label}
                        className={
                          tool.muted
                            ? "flex h-6 w-[33px] items-center justify-center text-[#a9b5bb]"
                            : "flex h-6 w-[33px] items-center justify-center"
                        }
                      >
                        {tool.icon}
                      </button>
                    ))}
                  </div>
                </div>
                <div className="grid min-h-0 flex-1 grid-cols-[19px_minmax(0,1fr)] grid-rows-[18px_minmax(0,1fr)]">
                  <RulerX />
                  <RulerY />
                  <div className="relative overflow-hidden font-['Noto_Sans_CJK_SC',sans-serif]">
                    <ParallelChart />
                    <SankeyChart />
                    <SunburstChart />
                    <ChordChart />
                    <BubbleChart />
                    <ChinaMap />
                    <BarCharts />
                  </div>
                </div>
                <div className="h-[9px] shrink-0 pb-[2px] pl-[2px] pr-[52px]">
                  <div className="h-full rounded-r bg-[#e8e4ec]" />
                </div>
              </main>
            </div>
          </div>
        </div>
        <div className="h-1 shrink-0 bg-[#17242c] pl-[442px]">
          <div className="h-full w-12 bg-[#3f4a52]" />
        </div>
      </div>
    </div>
  );
}
